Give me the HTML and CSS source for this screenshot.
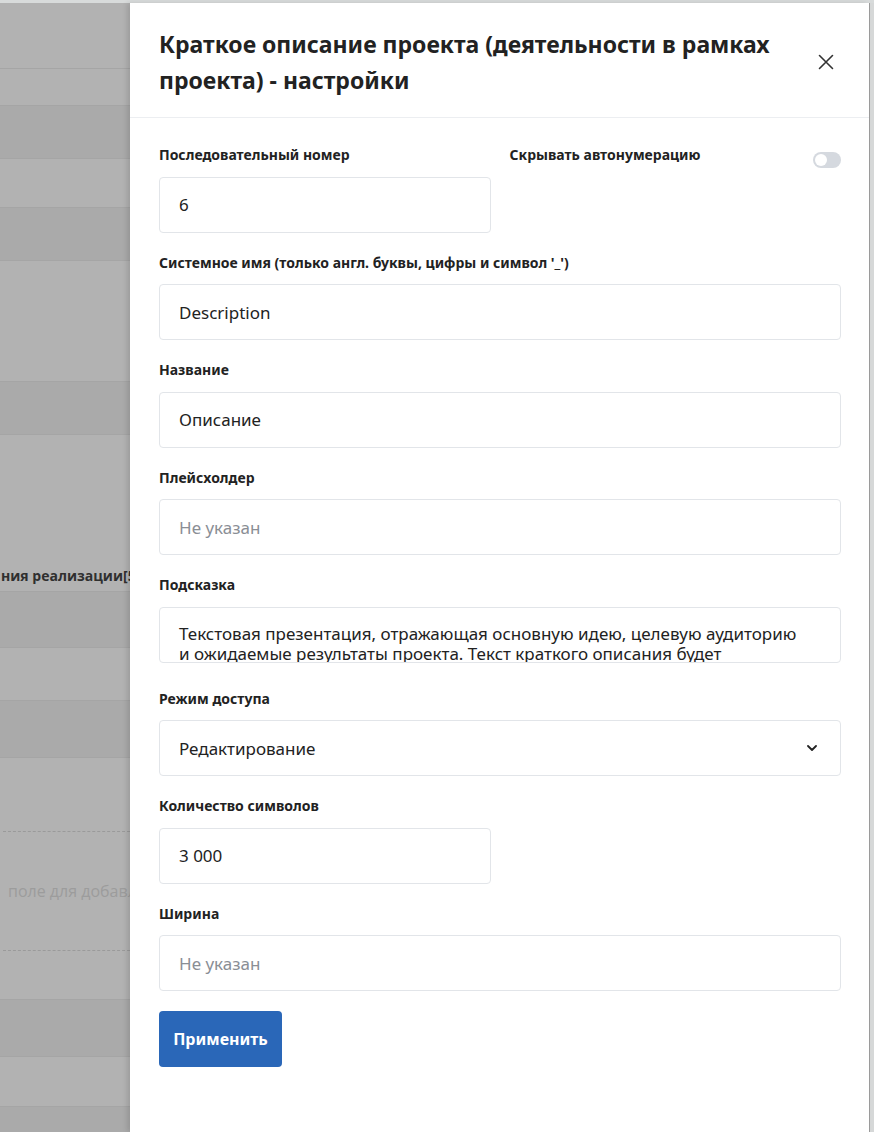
FILE: index.html
```html
<!DOCTYPE html>
<html lang="ru">
<head>
<meta charset="utf-8">
<title>Настройки поля</title>
<link rel="stylesheet" href="styles.css">
</head>
<body>
<div class="topbar"></div>
<div class="page">
  <div class="backdrop">
    <div class="brow h66 light"></div>
    <div class="brow h37 light"></div>
    <div class="brow h53 dark"></div>
    <div class="brow h49 light"></div>
    <div class="brow h53 dark"></div>
    <div class="brow h121 light"></div>
    <div class="brow h53 dark"></div>
    <div class="brow h157 light heading"><span>ния реализации[5]</span></div>
    <div class="brow h56 dark"></div>
    <div class="brow h53 light"></div>
    <div class="brow h57 dark"></div>
    <div class="brow h242 light dropzone-row">
      <div class="dropzone"><span>поле для добавления</span></div>
    </div>
    <div class="brow h57 dark"></div>
    <div class="brow h51 light"></div>
    <div class="brow h30 dark"></div>
  </div>

  <aside class="panel">
    <header class="panel-head">
      <h1 class="panel-title">Краткое описание проекта (деятельности в рамках проекта) - настройки</h1>
      <button class="close" aria-label="Закрыть">
        <svg width="16" height="16" viewBox="0 0 16 16"><path d="M1.5 1.5 L14.5 14.5 M14.5 1.5 L1.5 14.5" stroke="#333" stroke-width="1.6" fill="none" stroke-linecap="round"/></svg>
      </button>
    </header>

    <form class="form">
      <div class="grid2">
        <div class="field">
          <label class="label">Последовательный номер</label>
          <div class="input">6</div>
        </div>
        <div class="toggle-row">
          <span class="label">Скрывать автонумерацию</span>
          <span class="switch"><span class="knob"></span></span>
        </div>
      </div>

      <div class="field">
        <label class="label">Системное имя (только англ. буквы, цифры и символ '_')</label>
        <div class="input">Description</div>
      </div>

      <div class="field">
        <label class="label">Название</label>
        <div class="input">Описание</div>
      </div>

      <div class="field">
        <label class="label">Плейсхолдер</label>
        <div class="input placeholder">Не указан</div>
      </div>

      <div class="field field-area">
        <label class="label">Подсказка</label>
        <div class="input area">Текстовая презентация, отражающая основную идею, целевую аудиторию и ожидаемые результаты проекта. Текст краткого описания будет использоваться для публикации на сайте.</div>
      </div>

      <div class="field">
        <label class="label">Режим доступа</label>
        <div class="input select">
          <span>Редактирование</span>
          <svg width="10" height="6" viewBox="0 0 10 6"><path d="M1 1 L5 5 L9 1" stroke="#222" stroke-width="1.8" fill="none" stroke-linecap="round" stroke-linejoin="round"/></svg>
        </div>
      </div>

      <div class="grid2">
        <div class="field">
          <label class="label">Количество символов</label>
          <div class="input">3 000</div>
        </div>
      </div>

      <div class="field">
        <label class="label">Ширина</label>
        <div class="input placeholder">Не указан</div>
      </div>

      <div class="actions">
        <button type="button" class="btn">Применить</button>
      </div>
    </form>
  </aside>

  <div class="edge"></div>
</div>
</body>
</html>
```

FILE: styles.css
```css
* { box-sizing: border-box; }

html, body {
  margin: 0;
  padding: 0;
  height: 100%;
  overflow: hidden;
}

body {
  font-family: "Noto Sans", "Open Sans", sans-serif;
  color: #222;
  background: #b2b2b2;
}

.topbar {
  height: 3px;
  background: #d8dbdb;
}

.page {
  display: grid;
  grid-template-columns: 130px 739px 5px;
  height: 1129px;
}

/* backdrop page under the overlay */
.backdrop {
  overflow: hidden;
  display: flex;
  flex-direction: column;
}

.brow {
  flex: none;
  border-bottom: 1px solid #a5a5a5;
}
.brow.light { background: #b2b2b2; }
.brow.dark { background: #aaaaaa; }
.h30 { height: 30px; }
.h37 { height: 37px; }
.h49 { height: 49px; }
.h51 { height: 50px; }
.h53 { height: 53px; }
.h56 { height: 56px; }
.h57 { height: 57px; }
.h66 { height: 66px; }
.h121 { height: 121px; }
.h157 { height: 157px; }
.h242 { height: 242px; }

.heading {
  display: flex;
  align-items: flex-end;
  padding-bottom: 6px;
  white-space: nowrap;
}
.heading span {
  font-family: "Open Sans", sans-serif;
  font-weight: 700;
  font-size: 14px;
  color: #2f2f2f;
  margin-left: 1px;
}

.dropzone-row {
  padding-top: 73px;
}
.dropzone {
  height: 120px;
  margin-left: 3px;
  border-top: 1px dashed #9a9a9a;
  border-bottom: 1px dashed #9a9a9a;
  display: flex;
  align-items: center;
  white-space: nowrap;
  padding-left: 5px;
}
.dropzone span {
  font-family: "Open Sans", sans-serif;
  font-size: 16px;
  color: #9c9c9c;
}

/* side panel */
.panel {
  background: #fff;
  box-shadow: -3px 0 5px rgba(0, 0, 0, 0.12);
  display: flex;
  flex-direction: column;
  position: relative;
}

.edge {
  border-left: 1px solid #9c9c9c;
  background: #d6d8d8;
}

.panel-head {
  display: flex;
  align-items: center;
  justify-content: space-between;
  padding: 23px 28px 19px 29px;
  border-bottom: 1px solid #eceef1;
}

.panel-title {
  margin: 0;
  max-width: 640px;
  font-size: 23px;
  line-height: 36px;
  font-weight: 700;
  color: #222;
}

.close {
  border: 0;
  background: none;
  padding: 0;
  width: 16px;
  height: 16px;
  margin-right: 7px;
  display: flex;
}

.form {
  padding: 27px 28px 0 29px;
  display: flex;
  flex-direction: column;
  gap: 20px;
}

.grid2 {
  display: grid;
  grid-template-columns: 1fr 1fr;
  column-gap: 19px;
}

.field {
  display: flex;
  flex-direction: column;
}

.label {
  font-size: 14px;
  line-height: 20px;
  font-weight: 700;
  color: #222;
  margin-bottom: 11.5px;
}

.toggle-row {
  display: flex;
  justify-content: space-between;
  align-items: flex-start;
}

.switch {
  width: 28px;
  height: 16px;
  margin-top: 7px;
  border-radius: 8px;
  background: #d5d9df;
  padding: 2px;
  display: flex;
}
.knob {
  width: 12px;
  height: 12px;
  border-radius: 50%;
  background: #fff;
}

.input {
  height: 56px;
  border: 1px solid #e2e5e9;
  border-radius: 4px;
  padding: 0 19px;
  display: flex;
  align-items: center;
  font-size: 17px;
  color: #222;
  background: #fff;
}

.placeholder { color: #8a8e95; }

.field-area { margin-bottom: 6px; }

.area {
  display: block;
  padding: 16px 36px 0 19px;
  line-height: 20px;
  overflow: hidden;
}

.select {
  justify-content: space-between;
  padding-right: 23px;
}

.actions {
  display: flex;
}

.btn {
  height: 56px;
  width: 123px;
  border: 0;
  border-radius: 4px;
  background: #2a67b8;
  color: #fff;
  font-family: "Noto Sans", sans-serif;
  font-weight: 700;
  font-size: 16px;
}
```
